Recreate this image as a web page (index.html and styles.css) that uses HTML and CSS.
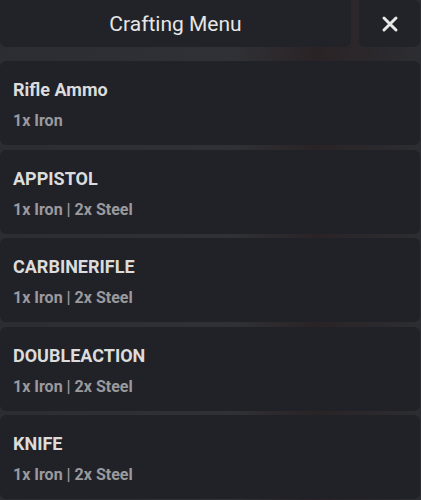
FILE: index.html
```html
<!DOCTYPE html>
<html lang="en">

<head>
    <meta charset="UTF-8">
    <meta name="viewport" content="width=device-width, initial-scale=1.0">
    <title>Crafting Menu</title>
    <link rel="stylesheet" href="styles.css">
</head>

<body>
    <div class="menu">
        <div class="menu-header">
            <div class="menu-title">Crafting Menu</div>
            <button class="menu-close">
                <svg width="18" height="18" viewBox="0 0 18 18">
                    <path d="M3 3 L15 15 M15 3 L3 15" stroke="#e8e8e8" stroke-width="3" stroke-linecap="round" />
                </svg>
            </button>
        </div>

        <div class="recipes">
            <div class="recipe">
                <div class="recipe-name">Rifle Ammo</div>
                <div class="recipe-cost">1x Iron</div>
            </div>
            <div class="recipe">
                <div class="recipe-name">APPISTOL</div>
                <div class="recipe-cost">1x Iron | 2x Steel</div>
            </div>
            <div class="recipe">
                <div class="recipe-name">CARBINERIFLE</div>
                <div class="recipe-cost">1x Iron | 2x Steel</div>
            </div>
            <div class="recipe">
                <div class="recipe-name">DOUBLEACTION</div>
                <div class="recipe-cost">1x Iron | 2x Steel</div>
            </div>
            <div class="recipe">
                <div class="recipe-name">KNIFE</div>
                <div class="recipe-cost">1x Iron | 2x Steel</div>
            </div>
        </div>
    </div>
</body>

</html>
```

FILE: styles.css
```css
* {
    margin: 0;
    padding: 0;
    box-sizing: border-box;
    font-family: Roboto, 'Liberation Sans', sans-serif;
}

body {
    width: 421px;
    height: 500px;
    overflow: hidden;
    background: linear-gradient(90deg, #2c2d32 0%, #303136 55%, #2a2326 75%, #2c2d32 100%);
}

/* header */
.menu-header {
    display: flex;
    gap: 8px;
    height: 47px;
}

.menu-title {
    width: 351px;
    display: flex;
    align-items: center;
    justify-content: center;
    background: #222328;
    border-radius: 0 0 6px 6px;
    color: #e6e6e6;
    font-size: 21px;
}

.menu-close {
    flex: 1;
    border: none;
    background: #222328;
    border-radius: 0 6px 6px 6px;
    display: flex;
    align-items: center;
    justify-content: center;
    margin-right: 1px;
}

/* recipe cards */
.recipes {
    display: flex;
    flex-direction: column;
    gap: 4.5px;
    margin-top: 14px;
    margin-right: 1px;
}

.recipe {
    height: 84px;
    padding: 18px 13px 0;
    background: #212228;
    border-radius: 6px;
}

.recipe-name {
    color: #dcdcdc;
    font-size: 18px;
    font-weight: bold;
    line-height: 21px;
}

.recipe-cost {
    color: #9a9a9e;
    font-size: 16px;
    font-weight: bold;
    margin-top: 11px;
    line-height: 19px;
}
```
